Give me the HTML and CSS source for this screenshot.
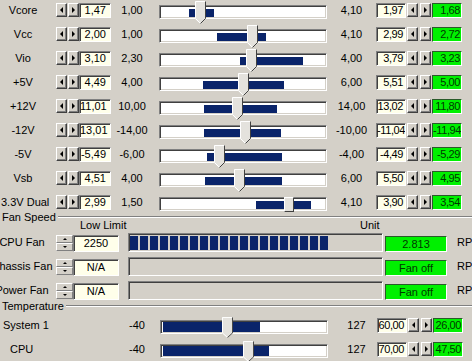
FILE: index.html
```html
<!DOCTYPE html>
<html lang="en">
<head>
    <meta charset="UTF-8">
    <title>Hardware Monitor</title>
    <link rel="stylesheet" href="styles.css">
</head>
<body>
    <!-- Tensions -->
    <div class="volts">
        <div class="row">
            <span class="lbl">Vcore</span>
            <span class="spin"><b class="btn lt"></b><b class="btn rt"></b></span>
            <span class="box val">1,47</span>
            <span class="min">1,00</span>
            <span class="track"><i class="fill" style="margin-left:29px;width:25px"></i><svg class="thumb" style="left:35px" viewBox="0 0 11 23"><path class="tf" d="M0 0H11V18L5.5 23L0 18Z"/><path class="tl" d="M5.5 22.5L0.5 17.5V0.5H10"/><path class="td" d="M10.5 0.5V17.5L5.5 22.5"/></svg></span>
            <span class="max">4,10</span>
            <span class="box val sm">1,97</span>
            <span class="spin wide"><b class="btn lt"></b><b class="btn rt"></b></span>
            <span class="box out">1,68</span>
        </div>
        <div class="row">
            <span class="lbl">Vcc</span>
            <span class="spin"><b class="btn lt"></b><b class="btn rt"></b></span>
            <span class="box val">2,00</span>
            <span class="min">1,00</span>
            <span class="track"><i class="fill" style="margin-left:57px;width:49px"></i><svg class="thumb" style="left:87px" viewBox="0 0 11 23"><path class="tf" d="M0 0H11V18L5.5 23L0 18Z"/><path class="tl" d="M5.5 22.5L0.5 17.5V0.5H10"/><path class="td" d="M10.5 0.5V17.5L5.5 22.5"/></svg></span>
            <span class="max">4,10</span>
            <span class="box val sm">2,99</span>
            <span class="spin wide"><b class="btn lt"></b><b class="btn rt"></b></span>
            <span class="box out">2,72</span>
        </div>
        <div class="row">
            <span class="lbl">Vio</span>
            <span class="spin"><b class="btn lt"></b><b class="btn rt"></b></span>
            <span class="box val">3,10</span>
            <span class="min">2,30</span>
            <span class="track"><i class="fill" style="margin-left:80px;width:63px"></i><svg class="thumb" style="left:86px" viewBox="0 0 11 23"><path class="tf" d="M0 0H11V18L5.5 23L0 18Z"/><path class="tl" d="M5.5 22.5L0.5 17.5V0.5H10"/><path class="td" d="M10.5 0.5V17.5L5.5 22.5"/></svg></span>
            <span class="max">4,00</span>
            <span class="box val sm">3,79</span>
            <span class="spin wide"><b class="btn lt"></b><b class="btn rt"></b></span>
            <span class="box out">3,23</span>
        </div>
        <div class="row">
            <span class="lbl">+5V</span>
            <span class="spin"><b class="btn lt"></b><b class="btn rt"></b></span>
            <span class="box val">4,49</span>
            <span class="min">4,00</span>
            <span class="track"><i class="fill" style="margin-left:43px;width:81px"></i><svg class="thumb" style="left:78px" viewBox="0 0 11 23"><path class="tf" d="M0 0H11V18L5.5 23L0 18Z"/><path class="tl" d="M5.5 22.5L0.5 17.5V0.5H10"/><path class="td" d="M10.5 0.5V17.5L5.5 22.5"/></svg></span>
            <span class="max">6,00</span>
            <span class="box val sm">5,51</span>
            <span class="spin wide"><b class="btn lt"></b><b class="btn rt"></b></span>
            <span class="box out">5,00</span>
        </div>
        <div class="row">
            <span class="lbl">+12V</span>
            <span class="spin"><b class="btn lt"></b><b class="btn rt"></b></span>
            <span class="box val">11,01</span>
            <span class="min">10,00</span>
            <span class="track"><i class="fill" style="margin-left:44px;width:73px"></i><svg class="thumb" style="left:72px" viewBox="0 0 11 23"><path class="tf" d="M0 0H11V18L5.5 23L0 18Z"/><path class="tl" d="M5.5 22.5L0.5 17.5V0.5H10"/><path class="td" d="M10.5 0.5V17.5L5.5 22.5"/></svg></span>
            <span class="max">14,00</span>
            <span class="box val sm">13,02</span>
            <span class="spin wide"><b class="btn lt"></b><b class="btn rt"></b></span>
            <span class="box out">11,80</span>
        </div>
        <div class="row">
            <span class="lbl">-12V</span>
            <span class="spin"><b class="btn lt"></b><b class="btn rt"></b></span>
            <span class="box val">13,01</span>
            <span class="min">-14,00</span>
            <span class="track"><i class="fill" style="margin-left:44px;width:77px"></i><svg class="thumb" style="left:80px" viewBox="0 0 11 23"><path class="tf" d="M0 0H11V18L5.5 23L0 18Z"/><path class="tl" d="M5.5 22.5L0.5 17.5V0.5H10"/><path class="td" d="M10.5 0.5V17.5L5.5 22.5"/></svg></span>
            <span class="max">-10,00</span>
            <span class="box val sm">-11,04</span>
            <span class="spin wide"><b class="btn lt"></b><b class="btn rt"></b></span>
            <span class="box out">-11,94</span>
        </div>
        <div class="row">
            <span class="lbl">-5V</span>
            <span class="spin"><b class="btn lt"></b><b class="btn rt"></b></span>
            <span class="box val">-5,49</span>
            <span class="min">-6,00</span>
            <span class="track"><i class="fill" style="margin-left:47px;width:75px"></i><svg class="thumb" style="left:54px" viewBox="0 0 11 23"><path class="tf" d="M0 0H11V18L5.5 23L0 18Z"/><path class="tl" d="M5.5 22.5L0.5 17.5V0.5H10"/><path class="td" d="M10.5 0.5V17.5L5.5 22.5"/></svg></span>
            <span class="max">-4,00</span>
            <span class="box val sm">-4,49</span>
            <span class="spin wide"><b class="btn lt"></b><b class="btn rt"></b></span>
            <span class="box out">-5,29</span>
        </div>
        <div class="row">
            <span class="lbl">Vsb</span>
            <span class="spin"><b class="btn lt"></b><b class="btn rt"></b></span>
            <span class="box val">4,51</span>
            <span class="min">4,00</span>
            <span class="track"><i class="fill" style="margin-left:45px;width:77px"></i><svg class="thumb" style="left:74px" viewBox="0 0 11 23"><path class="tf" d="M0 0H11V18L5.5 23L0 18Z"/><path class="tl" d="M5.5 22.5L0.5 17.5V0.5H10"/><path class="td" d="M10.5 0.5V17.5L5.5 22.5"/></svg></span>
            <span class="max">6,00</span>
            <span class="box val sm">5,50</span>
            <span class="spin wide"><b class="btn lt"></b><b class="btn rt"></b></span>
            <span class="box out">4,95</span>
        </div>
        <div class="row">
            <span class="lbl">3.3V Dual</span>
            <span class="spin"><b class="btn lt"></b><b class="btn rt"></b></span>
            <span class="box val">2,99</span>
            <span class="min">1,50</span>
            <span class="track"><i class="fill" style="margin-left:96px;width:55px"></i><i class="thumb-box" style="left:124px"></i></span>
            <span class="max">4,10</span>
            <span class="box val sm">3,90</span>
            <span class="spin wide"><b class="btn lt"></b><b class="btn rt"></b></span>
            <span class="box out">3,54</span>
        </div>
    </div>

    <!-- Ventilateurs -->
    <div class="legend fan-legend">Fan Speed</div>
    <div class="fan-head">
        <span class="low">Low Limit</span>
        <span class="unit-head">Unit</span>
    </div>
    <div class="row fan">
        <span class="lbl">CPU Fan</span>
        <span class="vspin"><b class="vbtn up"></b><b class="vbtn dn"></b></span>
        <span class="box val fanval">2250</span>
        <span class="bar"><i class="blocks" style="width:200px"></i></span>
        <span class="box out fanout">2.813</span>
        <span class="rpm">RPM</span>
    </div>
    <div class="row fan">
        <span class="lbl">Chassis Fan</span>
        <span class="vspin"><b class="vbtn up"></b><b class="vbtn dn"></b></span>
        <span class="box val fanval">N/A</span>
        <span class="bar"></span>
        <span class="box out fanout">Fan off</span>
        <span class="rpm">RPM</span>
    </div>
    <div class="row fan">
        <span class="lbl">Power Fan</span>
        <span class="vspin"><b class="vbtn up"></b><b class="vbtn dn"></b></span>
        <span class="box val fanval">N/A</span>
        <span class="bar"></span>
        <span class="box out fanout">Fan off</span>
        <span class="rpm">RPM</span>
    </div>

    <!-- Températures -->
    <div class="legend temp-legend">Temperature</div>
    <div class="temps">
        <div class="row">
            <span class="tlbl">System 1</span>
            <span class="tmin">-40</span>
            <span class="track"><i class="fill tfill" style="width:97px"></i><svg class="thumb tthumb" style="left:61px" viewBox="0 0 11 23" preserveAspectRatio="none"><path class="tf" d="M0 0H11V18L5.5 23L0 18Z"/><path class="tl" d="M5.5 22.5L0.5 17.5V0.5H10"/><path class="td" d="M10.5 0.5V17.5L5.5 22.5"/></svg></span>
            <span class="tmax">127</span>
            <span class="box val sm">60,00</span>
            <span class="spin wide"><b class="btn lt"></b><b class="btn rt"></b></span>
            <span class="box out">26,00</span>
        </div>
        <div class="row">
            <span class="tlbl indent">CPU</span>
            <span class="tmin">-40</span>
            <span class="track"><i class="fill tfill" style="width:106px"></i><svg class="thumb tthumb" style="left:82px" viewBox="0 0 11 23" preserveAspectRatio="none"><path class="tf" d="M0 0H11V18L5.5 23L0 18Z"/><path class="tl" d="M5.5 22.5L0.5 17.5V0.5H10"/><path class="td" d="M10.5 0.5V17.5L5.5 22.5"/></svg></span>
            <span class="tmax">127</span>
            <span class="box val sm">70,00</span>
            <span class="spin wide"><b class="btn lt"></b><b class="btn rt"></b></span>
            <span class="box out">47,50</span>
        </div>
    </div>
</body>
</html>
```

FILE: styles.css
```css
/* Général */
body {
    margin: 0;
    background-color: #D4D0C8; /* gris Windows */
    font-family: "Liberation Sans", Arial, sans-serif;
    font-size: 11px;
    color: #000;
    overflow: hidden;
    white-space: nowrap;
}

.row {
    display: flex;
    align-items: flex-start;
    height: 24px;
}

.row > * {
    flex-shrink: 0;
}

.lbl {
    display: flex;
    justify-content: center;
    width: 44px;
    margin-top: 3px;
    line-height: 15px;
}

.volts .lbl {
    justify-content: safe center;
    padding-left: 1px;
}

/* Boutons fléchés */
.spin {
    display: flex;
    gap: 1px;
    margin-top: 3px;
    margin-left: 12px;
}

.volts .spin:nth-child(2) {
    margin-left: 11px;
}

.spin.wide {
    gap: 2px;
    margin-left: 1px;
}

.btn {
    display: flex;
    align-items: center;
    justify-content: center;
    box-sizing: border-box;
    width: 11px;
    height: 14px;
    background-color: #D4D0C8;
    border: 1px solid;
    border-color: #fff #404040 #404040 #fff;
    box-shadow: inset -1px -1px #808080;
}

.btn::before {
    content: "";
    border-top: 3px solid transparent;
    border-bottom: 3px solid transparent;
}

.btn.lt::before {
    border-right: 3px solid #000;
    margin-left: -1px;
}

.btn.rt::before {
    border-left: 3px solid #000;
}

/* Champs */
.box {
    box-sizing: border-box;
    height: 15px;
    margin-top: 3px;
    border: 1px solid;
    border-color: #808080 #fff #fff #808080;
    line-height: 13px;
    overflow: hidden;
}

.val {
    width: 32px;
    padding-right: 4px;
    text-align: right;
    background-color: #FFFFEA;
    box-shadow: inset 1px 1px #404040;
}

.val.sm {
    width: 30px;
    padding-right: 2px;
    letter-spacing: -0.4px;
}

.out {
    width: 30px;
    margin-left: 1px;
    padding-right: 1px;
    text-align: right;
    letter-spacing: -0.4px;
    background-color: #00F000;
    color: #003800;
    border-color: #2a5a2a #fff #fff #2a5a2a;
}

.min {
    width: 42px;
    margin-top: 3px;
    margin-right: 6px;
    line-height: 15px;
    text-align: center;
}

.max {
    width: 49px;
    margin-top: 3px;
    line-height: 15px;
    text-align: center;
}

/* Curseurs */
.track {
    position: relative;
    display: block;
    box-sizing: border-box;
    width: 168px;
    height: 14px;
    margin-top: 5px;
    background-color: #fff;
    border: 1px solid;
    border-color: #808080 #fff #fff #808080;
    box-shadow: inset 1px 1px #404040, inset -1px -1px #D4D0C8;
}

.fill {
    display: block;
    height: 8px;
    margin-top: 3px;
    background-color: #0A246A;
}

.thumb {
    position: absolute;
    top: -5px;
    width: 11px;
    height: 23px;
}

.tf {
    fill: #E4E2DD;
}

.tl {
    fill: none;
    stroke: #fff;
}

.td {
    fill: none;
    stroke: #404040;
}

.thumb-box {
    position: absolute;
    top: -1px;
    box-sizing: border-box;
    width: 10px;
    height: 15px;
    background-color: #E4E2DD;
    border: 1px solid;
    border-color: #fff #404040 #404040 #fff;
}

/* Cadres */
.legend {
    display: flex;
    align-items: center;
    height: 12px;
    padding-left: 2px;
    line-height: 12px;
}

.legend::after {
    content: "";
    flex: 1;
    margin-left: 2px;
    border-top: 1px solid #808080;
    border-bottom: 1px solid #fff;
}

.fan-legend {
    margin-top: -5px;
}

.fan-head {
    display: flex;
    height: 13px;
    margin-top: -4px;
    line-height: 12px;
}

.low {
    width: 44px;
    margin-left: 80px;
    text-align: center;
}

.unit-head {
    margin-left: 236px;
}

/* Ventilateurs */
.vspin {
    display: flex;
    flex-direction: column;
    width: 17px;
    margin-top: 3px;
    margin-left: 12px;
}

.vbtn {
    display: flex;
    align-items: center;
    justify-content: center;
    box-sizing: border-box;
    height: 8px;
    background-color: #D4D0C8;
    border: 1px solid;
    border-color: #fff #808080 #808080 #fff;
}

.vbtn::before {
    content: "";
    border-left: 2px solid transparent;
    border-right: 2px solid transparent;
}

.vbtn.up::before {
    border-bottom: 2px solid #000;
}

.vbtn.dn::before {
    border-top: 2px solid #000;
}

.fanval {
    width: 46px;
    height: 17px;
    padding: 0;
    line-height: 15px;
    text-align: center;
}

.bar {
    display: block;
    box-sizing: border-box;
    width: 255px;
    height: 19px;
    margin-top: 1px;
    margin-left: 9px;
    border: 1px solid;
    border-color: #808080 #fff #fff #808080;
    box-shadow: inset 1px 1px #404040;
}

.blocks {
    display: block;
    height: 14px;
    margin-top: 2px;
    margin-left: 1px;
    background: repeating-linear-gradient(90deg, #0A246A 0 8px, transparent 8px 10px);
}

.fanout {
    width: 62px;
    height: 16px;
    margin-top: 4px;
    margin-left: 2px;
    padding: 0;
    line-height: 14px;
    text-align: center;
    letter-spacing: 0;
}

.rpm {
    margin-top: 3px;
    margin-left: 10px;
    line-height: 15px;
}

/* Températures */
.temp-legend {
    margin-top: -4px;
}

.temps {
    padding-top: 3px;
}

.tlbl {
    box-sizing: border-box;
    width: 120px;
    margin-top: 3px;
    padding-left: 3px;
    line-height: 15px;
}

.tlbl.indent {
    padding-left: 10px;
}

.tmin {
    width: 34px;
    margin-top: 3px;
    margin-right: 6px;
    line-height: 15px;
    text-align: center;
}

.tmax {
    box-sizing: border-box;
    width: 49px;
    margin-top: 3px;
    padding-left: 8px;
    line-height: 15px;
    text-align: center;
}

.tfill {
    height: 10px;
    margin-top: 1px;
    margin-left: 2px;
}

.tthumb {
    top: -4px;
    height: 21px;
}
```
